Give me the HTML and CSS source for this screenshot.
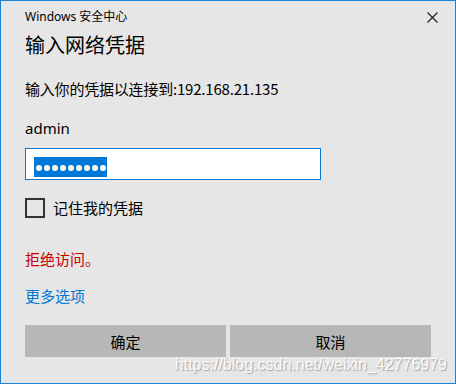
FILE: index.html
```html
<!DOCTYPE html>
<html lang="zh-CN">
<head>
  <meta charset="UTF-8" />
  <meta name="viewport" content="width=device-width, initial-scale=1" />
  <title>Windows 安全中心</title>
  <link rel="stylesheet" href="styles.css">
</head>
<body>
  <!-- Credential Dialog -->
  <div class="dialog">
    <div class="titlebar">
      <span class="app-name">Windows 安全中心</span>
      <button class="close-btn" aria-label="关闭">
        <svg width="11" height="11" viewBox="0 0 11 11">
          <path d="M0.5 0.5 L10.5 10.5 M10.5 0.5 L0.5 10.5" stroke="#1a1a1a" stroke-width="1.1" fill="none" />
        </svg>
      </button>
    </div>

    <h1 class="dialog-title">输入网络凭据</h1>
    <p class="dialog-desc">输入你的凭据以连接到:192.168.21.135</p>

    <div class="user-name">admin</div>

    <div class="password-box">
      <span class="selection">
        <i></i><i></i><i></i><i></i><i></i><i></i><i></i><i></i><i></i>
      </span>
    </div>

    <label class="remember">
      <span class="checkbox"></span>
      <span>记住我的凭据</span>
    </label>

    <p class="error-text">拒绝访问。</p>
    <a class="more-link" href="#">更多选项</a>

    <div class="actions">
      <button class="btn">确定</button>
      <button class="btn">取消</button>
    </div>

    <div class="watermark">https://blog.csdn.net/weixin_42776979</div>
  </div>
</body>
</html>
```

FILE: styles.css
```css
* {
  margin: 0;
  padding: 0;
  box-sizing: border-box;
}

body {
  font-family: 'Noto Sans', 'Noto Sans CJK SC', sans-serif;
  background: #e6e6e6;
  color: #000;
}

/* Dialog window */
.dialog {
  position: relative;
  width: 456px;
  height: 384px;
  background: #e6e6e6;
  border: 1px solid #1883d7;
  padding: 0 24px;
  overflow: hidden;
}

.titlebar {
  display: flex;
  justify-content: space-between;
  align-items: flex-start;
  margin-right: -24px;
  height: 24px;
}

.app-name {
  font-size: 12px;
  line-height: 16px;
  padding-top: 8px;
}

.close-btn {
  width: 46px;
  height: 30px;
  border: none;
  background: transparent;
  display: flex;
  align-items: center;
  justify-content: center;
  padding-top: 2px;
}

.dialog-title {
  font-size: 20px;
  font-weight: 400;
  line-height: 28px;
  margin-top: 7px;
}

.dialog-desc {
  font-family: 'Noto Sans CJK SC', sans-serif;
  font-size: 15px;
  line-height: 20px;
  letter-spacing: -0.2px;
  margin-top: 19px;
}

.user-name {
  font-size: 15px;
  line-height: 20px;
  margin-top: 19px;
}

/* Password field */
.password-box {
  margin-top: 10px;
  width: 296px;
  height: 32px;
  background: #fff;
  border: 1px solid #0078d7;
  padding: 5px 8px;
}

.selection {
  display: inline-flex;
  align-items: center;
  gap: 2px;
  height: 20px;
  padding: 0 1px 0 2px;
  background: #0078d7;
}

.selection i {
  width: 6px;
  height: 6px;
  border-radius: 50%;
  background: #fff;
  margin-top: 2px;
}

/* Remember checkbox */
.remember {
  display: flex;
  align-items: center;
  gap: 8px;
  margin-top: 18px;
  font-size: 15px;
  line-height: 20px;
}

.checkbox {
  width: 20px;
  height: 20px;
  border: 2px solid #333;
}

.error-text {
  font-size: 15px;
  line-height: 20px;
  color: #c80000;
  margin-top: 31px;
}

.more-link {
  display: block;
  font-size: 15px;
  line-height: 20px;
  color: #0078d7;
  text-decoration: none;
  margin-top: 17px;
}

/* Buttons */
.actions {
  display: grid;
  grid-template-columns: 1fr 1fr;
  gap: 4px;
  margin-top: 19px;
}

.btn {
  height: 32px;
  border: none;
  background: #b7b7b7;
  font-family: 'Noto Sans', 'Noto Sans CJK SC', sans-serif;
  font-size: 15px;
  color: #000;
}

.watermark {
  position: absolute;
  right: 8px;
  bottom: 9px;
  font-family: 'Liberation Sans', Arial, sans-serif;
  font-size: 16px;
  line-height: 18px;
  color: rgba(255, 255, 255, 0.92);
  text-shadow: 1px 1px 1px rgba(110, 110, 110, 0.55);
  pointer-events: none;
}
```
